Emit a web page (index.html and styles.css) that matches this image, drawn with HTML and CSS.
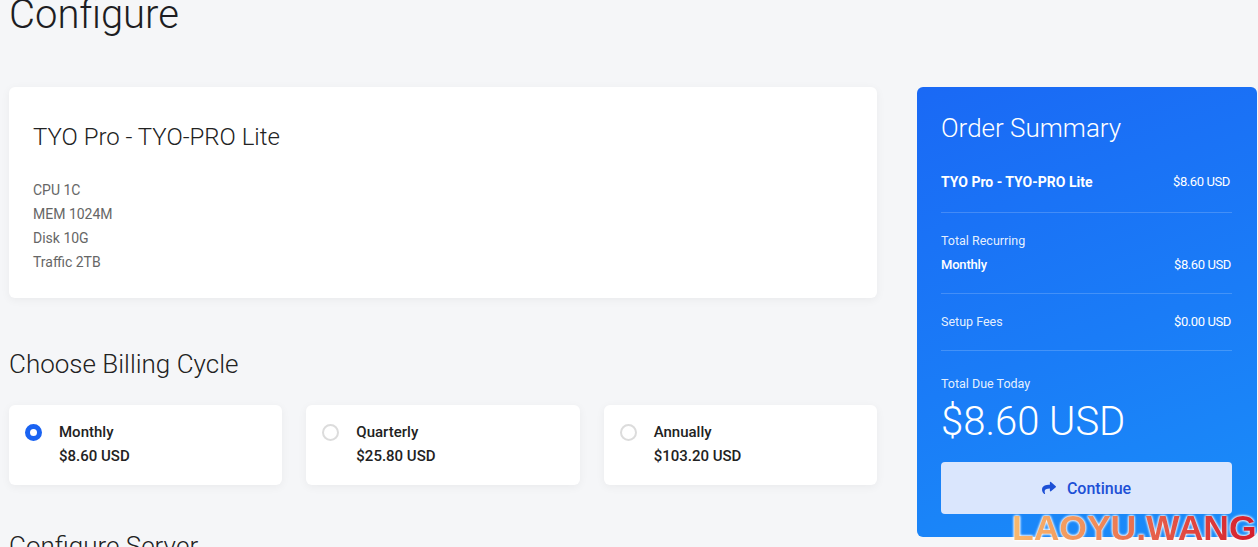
FILE: index.html
```html
<!DOCTYPE html>
<html lang="en">
<head>
<meta charset="utf-8">
<title>Configure</title>
<link rel="stylesheet" href="styles.css">
</head>
<body>

<div class="page">
  <h1 class="page-title">Configure</h1>

  <div class="layout">
    <div class="main">

      <div class="product-card">
        <h2 class="product-name">TYO Pro - TYO-PRO Lite</h2>
        <div class="product-specs">
          <div>CPU 1C</div>
          <div>MEM 1024M</div>
          <div>Disk 10G</div>
          <div>Traffic 2TB</div>
        </div>
      </div>

      <h2 class="section-title">Choose Billing Cycle</h2>

      <div class="cycles">
        <label class="cycle">
          <span class="radio radio-on"></span>
          <span class="cycle-text">
            <span class="cycle-name">Monthly</span>
            <span class="cycle-price">$8.60 USD</span>
          </span>
        </label>
        <label class="cycle">
          <span class="radio"></span>
          <span class="cycle-text">
            <span class="cycle-name">Quarterly</span>
            <span class="cycle-price">$25.80 USD</span>
          </span>
        </label>
        <label class="cycle">
          <span class="radio"></span>
          <span class="cycle-text">
            <span class="cycle-name">Annually</span>
            <span class="cycle-price">$103.20 USD</span>
          </span>
        </label>
      </div>

      <h2 class="section-title section-next">Configure Server</h2>
    </div>

    <div class="summary">
      <h3 class="summary-title">Order Summary</h3>

      <div class="summary-block block-product">
        <div class="summary-row">
          <span class="item-name">TYO Pro - TYO-PRO Lite</span>
          <span class="amount">$8.60 USD</span>
        </div>
      </div>

      <div class="summary-block">
        <div class="summary-label">Total Recurring</div>
        <div class="summary-row">
          <span class="item-sub">Monthly</span>
          <span class="amount">$8.60 USD</span>
        </div>
      </div>

      <div class="summary-block">
        <div class="summary-row">
          <span class="summary-label">Setup Fees</span>
          <span class="amount">$0.00 USD</span>
        </div>
      </div>

      <div class="summary-total">
        <div class="summary-label">Total Due Today</div>
        <div class="total-price">$8.60 USD</div>
        <button class="btn-continue" type="button">
          <svg class="btn-icon" viewBox="0 0 512 512" width="14" height="14"><path fill="currentColor" d="M503.7 189.8L327.7 37.9C312.3 24.5 288 35.3 288 56v80.1C127.4 137.9 0 170.1 0 322.3c0 61.4 39.6 122.3 83.3 154.1 13.7 9.9 33.1-2.5 28.1-18.6C66.1 312.8 132.9 274.3 288 272.1V360c0 20.7 24.3 31.5 39.7 18.2l176-152c11.1-9.6 11.1-26.8 0-36.4z"/></svg>
          Continue
        </button>
      </div>
    </div>
  </div>
</div>

<div class="watermark">LAOYU.WANG</div>

</body>
</html>
```

FILE: styles.css
```css
html, body { margin: 0; padding: 0; }

body {
  background: #f5f6f8;
  font-family: Roboto, "Liberation Sans", sans-serif;
  color: #222;
  overflow: hidden;
  height: 547px;
}

.page { padding: 0 1px 0 9px; }

.page-title {
  margin: -9px 0 48px;
  font-size: 40px;
  font-weight: 300;
  line-height: 48px;
  color: #1d1d22;
}

.layout {
  display: grid;
  grid-template-columns: 868px 340px;
  gap: 40px;
  align-items: start;
}

/* product card */
.product-card {
  background: #fff;
  border-radius: 6px;
  box-shadow: 0 2px 10px rgba(0, 0, 0, 0.05);
  padding: 35px 24px 24px;
  height: 211px;
  box-sizing: border-box;
}

.product-name {
  margin: 0 0 25px;
  font-size: 24px;
  font-weight: 300;
  line-height: 31px;
  color: #222;
}

.product-specs {
  font-size: 14px;
  line-height: 24px;
  color: #666;
}

.section-title {
  margin: 51px 0 25px;
  font-size: 26px;
  font-weight: 300;
  line-height: 31px;
  color: #222;
}

.section-next { margin-top: 46px; }

/* billing cycles */
.cycles {
  display: grid;
  grid-template-columns: repeat(3, 1fr);
  gap: 24px;
}

.cycle {
  display: flex;
  align-items: flex-start;
  gap: 17px;
  height: 80px;
  box-sizing: border-box;
  padding: 15px 16px;
  background: #fff;
  border-radius: 6px;
  box-shadow: 0 2px 10px rgba(0, 0, 0, 0.05);
}

.radio {
  width: 17px;
  height: 17px;
  margin-top: 4px;
  box-sizing: border-box;
  border: 2px solid #dcdcdc;
  border-radius: 50%;
  flex: none;
}

.radio-on { border: 5px solid #1a63f2; background: #fff; }

.cycle-text { display: flex; flex-direction: column; }

.cycle-name, .cycle-price {
  font-size: 15px;
  font-weight: 500;
  line-height: 24px;
  color: #222;
}

/* order summary */
.summary {
  background: linear-gradient(160deg, #1a69f5 0%, #1a7cf7 55%, #1a8df9 100%);
  border-radius: 6px;
  padding: 26px 25px 23px 24px;
  color: #fff;
  height: 450px;
  box-sizing: border-box;
}

.summary-title {
  margin: 0 0 26px;
  font-size: 26px;
  font-weight: 300;
  line-height: 31px;
}

.summary-block {
  padding: 16px 0 16px;
  border-bottom: 1px solid rgba(255, 255, 255, 0.18);
}

.block-product { padding: 0 1px 18px 0; }

.summary-block .summary-row { padding-right: 1px; }

.summary-row {
  display: flex;
  justify-content: space-between;
  align-items: center;
  line-height: 24px;
}

.item-name { font-size: 14px; font-weight: 700; }

.item-sub { font-size: 13px; font-weight: 500; letter-spacing: -0.2px; }

.amount { font-size: 13px; letter-spacing: -0.4px; }

.summary-label {
  font-size: 12.5px;
  line-height: 24px;
  color: rgba(255, 255, 255, 0.9);
}

.summary-total { padding-top: 21px; }

.total-price {
  font-size: 40px;
  font-weight: 300;
  line-height: 48px;
  margin: 2px 0 16px;
}

.btn-continue {
  display: flex;
  align-items: center;
  justify-content: center;
  gap: 11px;
  width: 100%;
  height: 52px;
  border: 0;
  border-radius: 4px;
  background: #dae6fd;
  color: #1d50d6;
  font-family: Roboto, "Liberation Sans", sans-serif;
  font-size: 16px;
  font-weight: 500;
  cursor: pointer;
}

.btn-icon { display: block; }

/* watermark over the corner */
.watermark {
  position: absolute;
  left: 1012px;
  top: 508px;
  font-family: "Liberation Sans", sans-serif;
  font-weight: 700;
  font-size: 35.5px;
  line-height: 40px;
  background: linear-gradient(90deg, #f9b96c 0%, #ef8a5a 35%, #e35345 65%, #d41c2c 100%);
  -webkit-background-clip: text;
  background-clip: text;
  color: transparent;
  filter: drop-shadow(0 0 1px #fff) drop-shadow(0 0 1px #fff);
}
```
